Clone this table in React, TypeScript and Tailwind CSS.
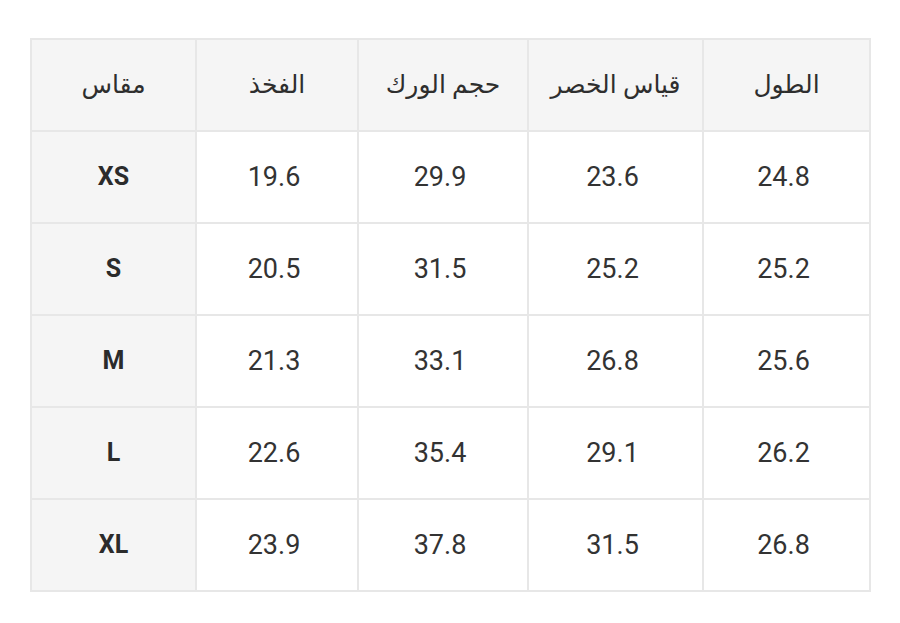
const headers = ['مقاس', 'الفخذ', 'حجم الورك', 'قياس الخصر', 'الطول']

const rows = [
  ['XS', '19.6', '29.9', '23.6', '24.8'],
  ['S', '20.5', '31.5', '25.2', '25.2'],
  ['M', '21.3', '33.1', '26.8', '25.6'],
  ['L', '22.6', '35.4', '29.1', '26.2'],
  ['XL', '23.9', '37.8', '31.5', '26.8'],
]

export default function App() {
  return (
    <div className="w-[900px] h-[623px] bg-white pt-[38px] pl-[30px]" style={{ fontFamily: 'Roboto, "DejaVu Sans", sans-serif' }}>
      <div className="inline-grid grid-cols-[163px_160px_168px_173px_165px] auto-rows-[90px] gap-[2px] p-[2px] bg-[#e7e7e7]">
        {headers.map((h) => (
          <div key={h} className="bg-[#f5f5f5] flex items-center justify-center text-[25px] text-[#2e2e2e]" dir="rtl">
            {h}
          </div>
        ))}
        {rows.map((r) =>
          r.map((c, i) => (
            <div
              key={r[0] + i}
              className={
                i === 0
                  ? 'bg-[#f5f5f5] flex items-center justify-center text-[25px] font-bold text-[#2b2b2b]'
                  : 'bg-white flex items-center justify-center pr-[6px] text-[27px] text-[#333333]'
              }
            >
              {c}
            </div>
          ))
        )}
      </div>
    </div>
  )
}
